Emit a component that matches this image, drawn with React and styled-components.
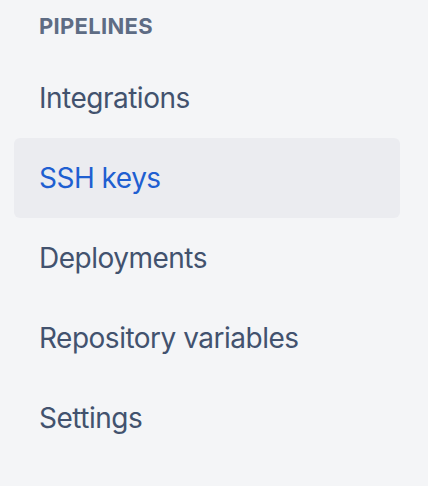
import React from "react";
import styled, { createGlobalStyle } from "styled-components";

const GlobalStyle = createGlobalStyle`
  html, body {
    margin: 0;
    padding: 0;
    background: #f4f5f7;
  }
  body {
    font-family: Inter, "Noto Sans", "Liberation Sans", sans-serif;
    -webkit-font-smoothing: antialiased;
  }
`;

const Sidebar = styled.nav`
  display: flex;
  flex-direction: column;
  width: 386px;
  padding: 14px 0 0 14px;
  min-height: 472px;
`;

const Heading = styled.h2`
  margin: 0 0 20px 0;
  padding-left: 25px;
  font-size: 22px;
  line-height: 24px;
  font-weight: 700;
  text-transform: uppercase;
  letter-spacing: 0.3px;
  color: #5e6c84;
`;

const List = styled.ul`
  list-style: none;
  margin: 0;
  padding: 0;
  display: flex;
  flex-direction: column;
`;

const Item = styled.li`
  height: 80px;
  line-height: 80px;
  padding-left: 25px;
  border-radius: 6px;
  font-size: 28px;
  font-weight: 400;
  letter-spacing: -0.5px;
  color: ${(p) => (p.$active ? "#1f5fd1" : "#42526e")};
  background: ${(p) => (p.$active ? "#ebecf0" : "transparent")};
`;

const items = [
  "Integrations",
  "SSH keys",
  "Deployments",
  "Repository variables",
  "Settings",
];

export default function App() {
  return (
    <>
      <GlobalStyle />
      <Sidebar>
        <Heading>Pipelines</Heading>
        <List>
          {items.map((label) => (
            <Item key={label} $active={label === "SSH keys"}>
              {label}
            </Item>
          ))}
        </List>
      </Sidebar>
    </>
  );
}
